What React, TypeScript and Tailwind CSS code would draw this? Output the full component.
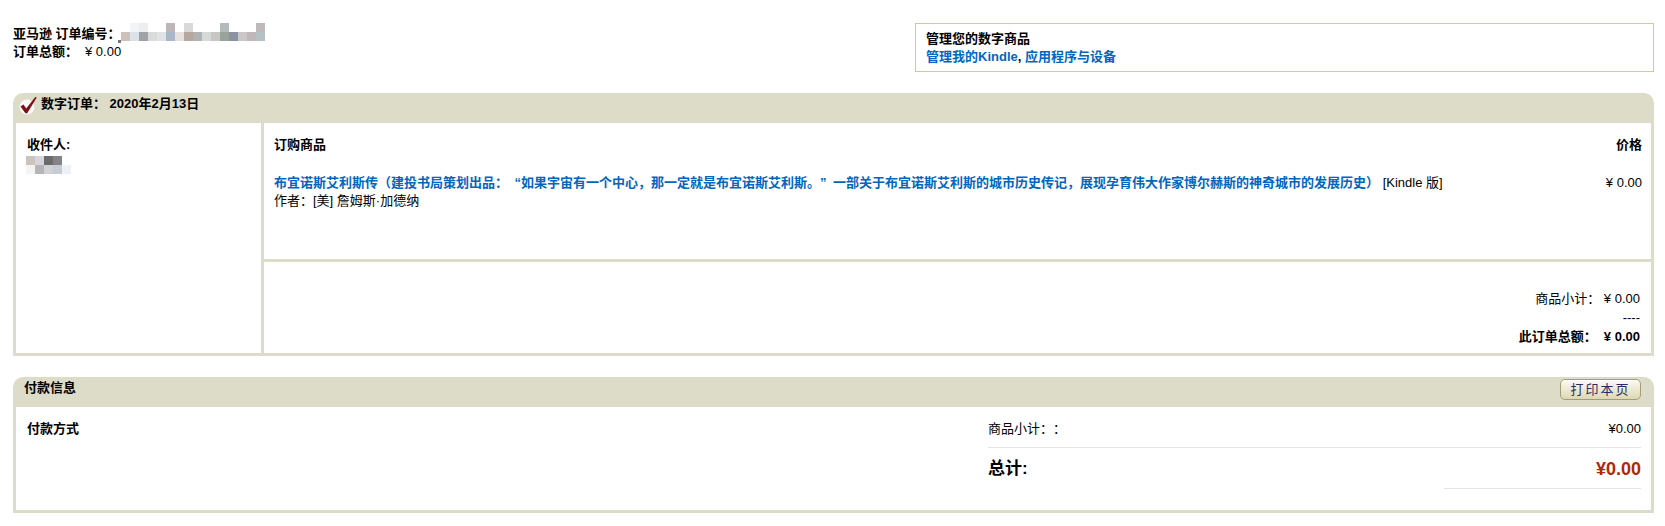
import React from "react";

const orderTopRow: (string | null)[] = [
  null, "#f2f4f8", "#eeeeef", null, null, "#bdb6b9", null, "#d9d9db", null, null, null, "#b5bbbd", null, null, null, "#c0b8ba",
];
const orderBottomRow = [
  "#cdc1bc", "#dbe2e9", "#9fa3a6", "#d9dcda", "#e0e3e4", "#a9b7c8", "#e6e2df", "#b6a7a1",
  "#b0b3b4", "#d7d8d8", "#c9c7c4", "#9aa29e", "#8b92a1", "#cbc7c6", "#c0b7ba", "#b7c1c5",
];
const nameTopRow = ["#cbc3be", "#d5d6da", "#6b6b6d", "#858285", null];
const nameBottomRow = ["#f4f4f4", "#b5b5b7", "#d0d2d6", "#c5ccd6", "#eef2f8"];

function Pixels({ rows }: { rows: (string | null)[][] }) {
  return (
    <div className="flex flex-col">
      {rows.map((row, i) => (
        <div key={i} className="flex">
          {row.map((c, j) => (
            <div key={j} className="w-[9px] h-[9px]" style={{ backgroundColor: c ?? "transparent" }} />
          ))}
        </div>
      ))}
    </div>
  );
}

function CheckIcon() {
  return (
    <svg width="20" height="20" viewBox="0 0 20 20" className="shrink-0">
      <circle cx="9" cy="12" r="7.5" fill="#ffffff" opacity="0.85" />
      <path d="M2.5 11.5 L5.5 9.5 L8.2 13.5 L17.5 1.8 L18.6 2.8 L9.2 18.2 L7.4 18.2 Z" fill="#7d1118" />
    </svg>
  );
}

export default function App() {
  return (
    <div
      lang="zh-CN"
      className="w-[1665px] h-[526px] bg-white pl-[13px] pr-[11px] text-[13px] leading-[18px] text-black font-['Liberation_Sans','Noto_Sans_CJK_SC',sans-serif]"
    >
      {/* top */}
      <div className="flex justify-between items-start">
        <div className="mt-[25px]">
          <div className="flex items-center">
            <span className="font-bold">亚马逊 订单编号：</span>
            <div className="relative -mt-[4px]">
              <Pixels rows={[orderTopRow, orderBottomRow]} />
              <div className="absolute -left-[3px] bottom-[-2px] w-[3px] h-[3px] bg-[#777]" />
            </div>
          </div>
          <div className="flex">
            <span className="font-bold">订单总额：</span>
            <span className="ml-[7px]">¥ 0.00</span>
          </div>
        </div>
        <div className="mt-[23px] w-[739px] h-[49px] border border-[#cccc99] px-[10px] pt-[6px]">
          <div className="font-bold">管理您的数字商品</div>
          <div className="font-bold">
            <span className="text-[#0066c0]">管理我的Kindle</span>, <span className="text-[#0066c0]">应用程序与设备</span>
          </div>
        </div>
      </div>

      {/* digital order */}
      <div className="mt-[21px] rounded-t-[10px] bg-[#dcdcc9] px-[3px] pb-[3px]">
        <div className="h-[30px] flex items-start pl-[2px] pt-[2px]">
          <CheckIcon />
          <span className="font-bold ml-[3px] mt-[0px]">数字订单：&nbsp;2020年2月13日</span>
        </div>
        <div className="flex gap-[3px] h-[230px]">
          <div className="w-[245px] bg-white pl-[11px] pt-[13px]">
            <div className="font-bold">收件人:</div>
            <div className="mt-[2px] -ml-[1px]">
              <Pixels rows={[nameTopRow, nameBottomRow]} />
            </div>
          </div>
          <div className="flex-1 flex flex-col gap-[3px]">
            <div className="h-[136px] bg-white pl-[10px] pr-[9px] pt-[13px]">
              <div className="flex justify-between font-bold">
                <span>订购商品</span>
                <span>价格</span>
              </div>
              <div className="flex justify-between mt-[20px]">
                <div>
                  <span className="font-bold text-[#0066c0]">
                    布宜诺斯艾利斯传（建投书局策划出品：<span className="inline-block w-[13px] text-right">“</span>如果宇宙有一个中心，那一定就是布宜诺斯艾利斯。<span className="inline-block w-[13px] text-left">”</span>一部关于布宜诺斯艾利斯的城市历史传记，展现孕育伟大作家博尔赫斯的神奇城市的发展历史）
                  </span>
                  <span> [Kindle 版]</span>
                </div>
                <span>¥ 0.00</span>
              </div>
              <div>作者：[美] 詹姆斯·加德纳</div>
            </div>
            <div className="flex-1 bg-white flex flex-col items-end justify-end pr-[11px] pb-[7px] leading-[19px]">
              <div>商品小计：&nbsp;¥ 0.00</div>
              <div>----</div>
              <div className="font-bold">此订单总额：&nbsp;&nbsp;¥ 0.00</div>
            </div>
          </div>
        </div>
      </div>

      {/* payment */}
      <div className="mt-[21px] rounded-t-[10px] bg-[#dcdcc9] px-[3px] pb-[3px]">
        <div className="h-[30px] flex justify-between items-start pl-[8px] pr-[10px]">
          <span className="font-bold mt-[2px]">付款信息</span>
          <button className="mt-[2px] h-[21px] w-[81px] rounded-[5px] border border-[#a39c74] bg-gradient-to-b from-[#fbfaf0] to-[#ddd8b4] text-[13px] leading-[19px] tracking-[2px] text-[#2b2b63] shadow-[inset_0_1px_0_#ffffff]">
            打印本页
          </button>
        </div>
        <div className="h-[103px] bg-white flex pl-[11px] pr-[10px] pt-[13px]">
          <div className="flex-1 font-bold">付款方式</div>
          <div className="w-[653px]">
            <div className="flex justify-between pb-[9px] border-b border-[#e4e4e4]">
              <span>商品小计<span className="inline-block w-[13px]">：</span><span className="inline-block w-[13px]">：</span></span>
              <span>¥0.00</span>
            </div>
            <div className="flex justify-between items-center mt-[10px] h-[22px]">
              <span className="font-bold text-[17px]">总计:</span>
              <span className="font-bold text-[18px] text-[#b12704]">¥0.00</span>
            </div>
            <div className="mt-[8px] ml-auto w-[197px] h-px bg-[#e4e4e4]" />
          </div>
        </div>
      </div>
    </div>
  );
}
